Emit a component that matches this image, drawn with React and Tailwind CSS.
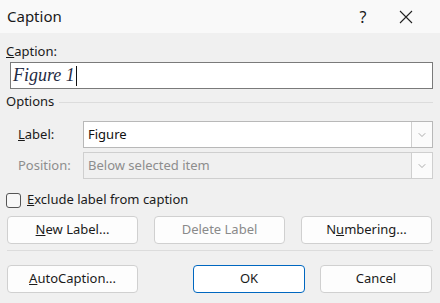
import { ChevronDown } from 'lucide-react'

const font = { fontFamily: '"Noto Sans", "Segoe UI", sans-serif' }

function Btn({ children, className = '', disabled, primary }) {
  return (
    <div
      className={
        'h-[28px] flex items-center justify-center rounded-[4px] text-[13px] ' +
        (primary
          ? 'border border-[#0067c0] bg-white text-[#1a1a1a] '
          : 'border border-[#d0d0d0] bg-[#fdfdfd] ' + (disabled ? 'text-[#8a8a8a] ' : 'text-[#1a1a1a] ')) +
        className
      }
    >
      {children}
    </div>
  )
}

function Combo({ value, disabled }) {
  return (
    <div
      className={
        'w-[350px] h-[27px] flex border ' +
        (disabled ? 'border-[#cfcfcf] bg-[#f0f0f0]' : 'border-[#b8b8b8] bg-white')
      }
    >
      <div className={'flex-1 flex items-center pl-[4px] text-[13px] ' + (disabled ? 'text-[#8d8d8d]' : 'text-[#111]')}>
        {value}
      </div>
      <div className="w-[21px] flex items-center justify-center border-l border-[#cfcfcf] bg-[#fbfbfb]">
        <ChevronDown size={12} strokeWidth={1.2} className="text-[#777]" />
      </div>
    </div>
  )
}

export default function App() {
  return (
    <div className="w-[440px] h-[303px] bg-[#f0f0f0] text-[#1a1a1a] overflow-hidden" style={font}>
      {/* Title bar */}
      <div className="h-[33px] bg-[#f9f9f9] flex items-center pl-[7px]">
        <span className="text-[15px] flex-1">Caption</span>
        <span className="text-[16px] w-[24px] text-center mr-[24px]">?</span>
        <svg width="14" height="14" viewBox="0 0 14 14" className="mr-[27px]">
          <path d="M1 1 L13 13 M13 1 L1 13" stroke="#222" strokeWidth="1.1" />
        </svg>
      </div>

      <div className="pl-[6px] pr-[7px]">
        <div className="mt-[9px] text-[13px] leading-[18px]">
          <span className="underline">C</span>aption:
        </div>
        <div className="ml-[4px] mt-[2px] h-[27px] border border-[#7a7a7a] bg-white flex items-center pl-[2px]">
          <span className="text-[18px] italic text-[#1f2b44]" style={{ fontFamily: '"Liberation Serif", serif' }}>
            Figure 1
          </span>
          <span className="w-px h-[20px] bg-[#111] ml-[1px]" />
        </div>

        {/* Options */}
        <div className="mt-[5px] flex items-center h-[16px]">
          <span className="text-[13px] mr-[5px]">Options</span>
          <div className="flex-1 h-px bg-[#dcdcdc]" />
        </div>

        <div className="mt-[11px] flex items-center">
          <span className="w-[77px] pl-[12px] text-[13px]">
            <span className="underline">L</span>abel:
          </span>
          <Combo value="Figure" />
        </div>
        <div className="mt-[4px] flex items-center">
          <span className="w-[77px] pl-[12px] text-[13px] text-[#8d8d8d]">Position:</span>
          <Combo value="Below selected item" disabled />
        </div>

        <div className="mt-[13px] flex items-center h-[16px]">
          <div className="w-[15px] h-[15px] border border-[#555] rounded-[3px] bg-[#f7f7f7] mr-[6px]" />
          <span className="text-[13px]">
            <span className="underline">E</span>xclude label from caption
          </span>
        </div>

        <div className="mt-[8px] flex ml-[1px] gap-[16px]">
          <Btn className="w-[131px]">
            <span className="underline">N</span>ew Label...
          </Btn>
          <Btn className="w-[131px]" disabled>
            Delete Label
          </Btn>
          <Btn className="w-[131px]">
            N<span className="underline">u</span>mbering...
          </Btn>
        </div>

        <div className="mt-[6px] ml-[1px] h-px bg-[#dcdcdc]" />

        <div className="mt-[14px] flex ml-[1px]">
          <Btn className="w-[131px]">
            <span className="underline">A</span>utoCaption...
          </Btn>
          <Btn className="w-[112px] ml-[55px]" primary>
            OK
          </Btn>
          <Btn className="w-[112px] ml-[15px]">Cancel</Btn>
        </div>
      </div>
    </div>
  )
}
